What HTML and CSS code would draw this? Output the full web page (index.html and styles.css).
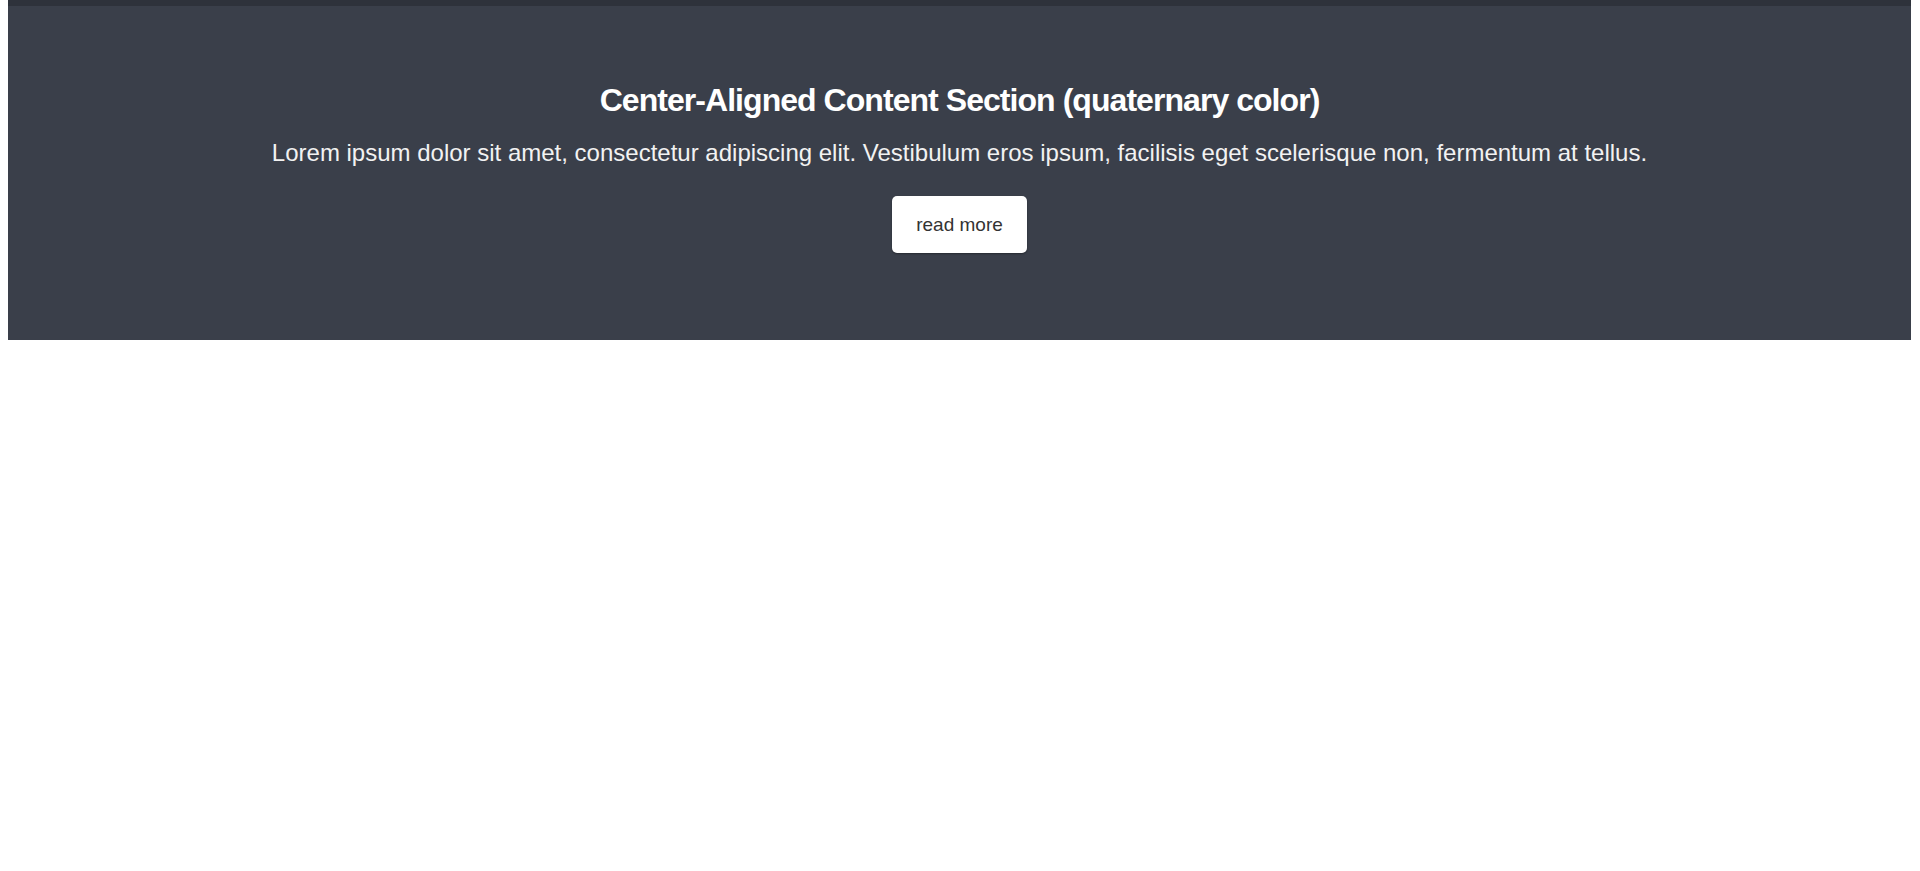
FILE: index.html
```html
<!DOCTYPE html>
<html>
<head>
<meta charset="utf-8">
<link rel="stylesheet" href="styles.css">
</head>
<body>
<section class="hero">
  <h2 class="hero-title">Center-Aligned Content Section (quaternary color)</h2>
  <p class="hero-text">Lorem ipsum dolor sit amet, consectetur adipiscing elit. Vestibulum eros ipsum, facilisis eget scelerisque non, fermentum at tellus.</p>
  <a class="hero-btn" href="#">read more</a>
</section>
</body>
</html>
```
FILE: styles.css
```css
html, body { margin: 0; padding: 0; background: #fff; }
body { padding: 0 9px 0 8px; font-family: "Liberation Sans", Arial, sans-serif; }
.hero {
  background: #3a3f4a;
  border-top: 6px solid #2e323b;
  height: 334px;
  box-sizing: content-box;
  display: flex;
  flex-direction: column;
  align-items: center;
  color: #fff;
}
.hero-title {
  margin: 75px 0 0;
  font-size: 32px;
  line-height: 38px;
  font-weight: bold;
  letter-spacing: -0.95px;
}
.hero-text {
  margin: 20px 0 0;
  font-size: 24px;
  line-height: 28px;
  color: #f2f2f2;
}
.hero-btn {
  margin-top: 29px;
  width: 135px;
  height: 57px;
  box-sizing: border-box;
  background: #fff;
  border-radius: 5px;
  box-shadow: 0 1px 2px rgba(0, 0, 0, 0.35);
  color: #333;
  text-decoration: none;
  font-size: 19px;
  display: flex;
  align-items: center;
  justify-content: center;
}
```
